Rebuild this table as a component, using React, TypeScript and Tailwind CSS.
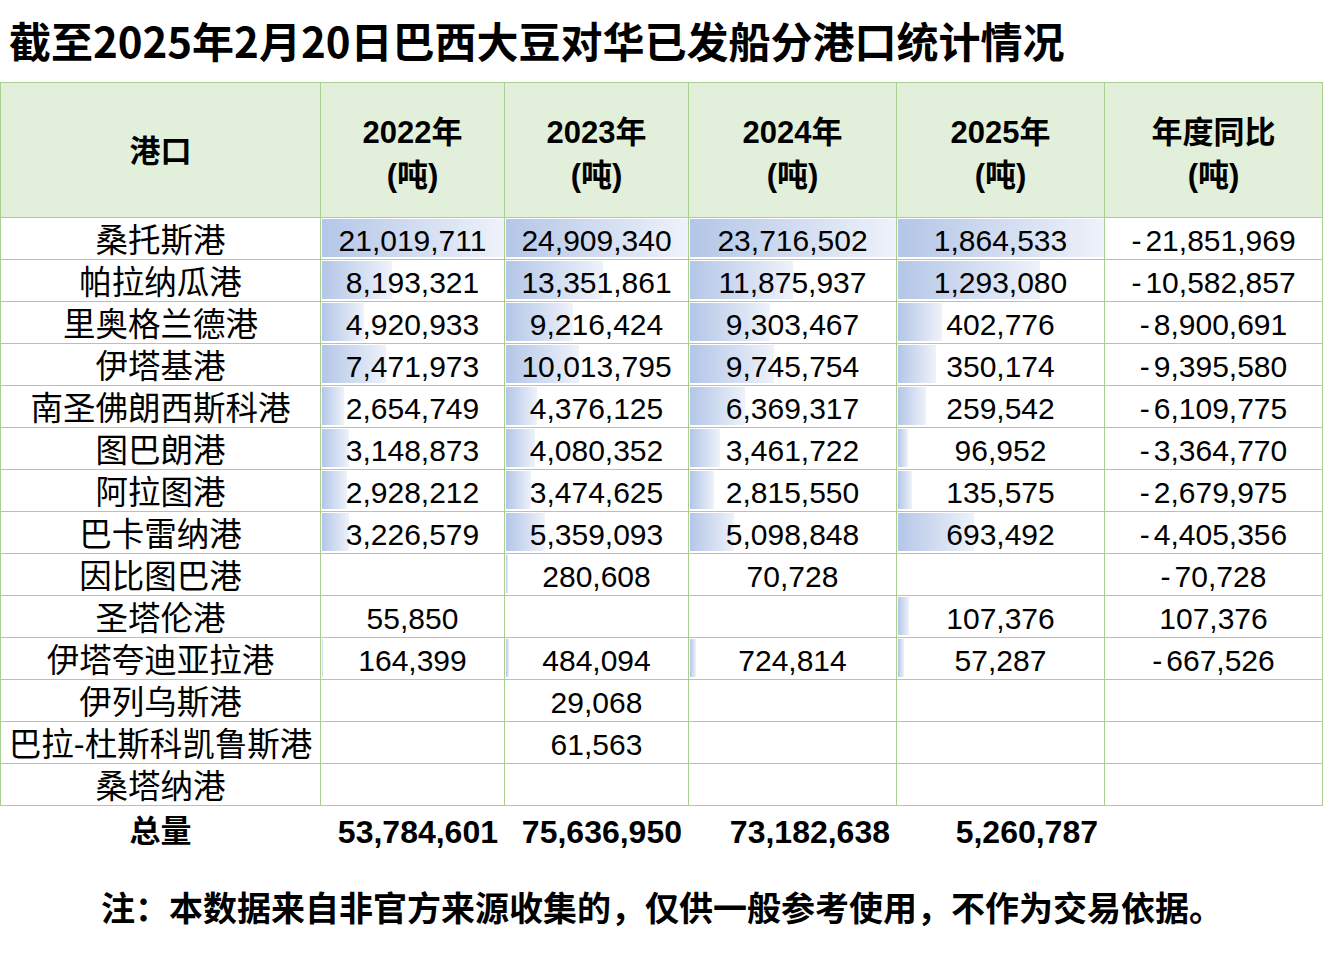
type Row = {
  port: string
  values: (number | null)[]
  yoy: string
}

const rows: Row[] = [
  { port: '桑托斯港', values: [21019711, 24909340, 23716502, 1864533], yoy: '-21,851,969' },
  { port: '帕拉纳瓜港', values: [8193321, 13351861, 11875937, 1293080], yoy: '-10,582,857' },
  { port: '里奥格兰德港', values: [4920933, 9216424, 9303467, 402776], yoy: '-8,900,691' },
  { port: '伊塔基港', values: [7471973, 10013795, 9745754, 350174], yoy: '-9,395,580' },
  { port: '南圣佛朗西斯科港', values: [2654749, 4376125, 6369317, 259542], yoy: '-6,109,775' },
  { port: '图巴朗港', values: [3148873, 4080352, 3461722, 96952], yoy: '-3,364,770' },
  { port: '阿拉图港', values: [2928212, 3474625, 2815550, 135575], yoy: '-2,679,975' },
  { port: '巴卡雷纳港', values: [3226579, 5359093, 5098848, 693492], yoy: '-4,405,356' },
  { port: '因比图巴港', values: [null, 280608, 70728, null], yoy: '-70,728' },
  { port: '圣塔伦港', values: [55850, null, null, 107376], yoy: '107,376' },
  { port: '伊塔夸迪亚拉港', values: [164399, 484094, 724814, 57287], yoy: '-667,526' },
  { port: '伊列乌斯港', values: [null, 29068, null, null], yoy: '' },
  { port: '巴拉-杜斯科凯鲁斯港', values: [null, 61563, null, null], yoy: '' },
  { port: '桑塔纳港', values: [null, null, null, null], yoy: '' },
]

const years = ['2022年', '2023年', '2024年', '2025年']
// inner width of each year cell, used to scale the data bars
const barSpace = [182, 182, 206, 206]
const totals = ['53,784,601', '75,636,950', '73,182,638', '5,260,787']

const fmt = (n: number) => n.toLocaleString('en-US')

const max = [0, 1, 2, 3].map((i) => Math.max(...rows.map((r) => r.values[i] ?? 0)))

function ValueCell({ value, col }: { value: number | null; col: number }) {
  const bar = value ? Math.floor((value / max[col]) * barSpace[col]) : 0
  return (
    <div className="relative flex h-[42px] items-center justify-center border-r border-b border-[#a9d08e] pt-[4px]">
      {bar > 0 && (
        <div
          className="absolute top-[1px] bottom-[2px] left-[1px] bg-linear-to-r from-[#b4c6e7] to-[#eef2fa]"
          style={{ width: bar }}
        />
      )}
      <span className="relative">{value ? fmt(value) : ''}</span>
    </div>
  )
}

function Change({ text }: { text: string }) {
  const neg = text.startsWith('-')
  return (
    <div className="flex h-[42px] items-center justify-center border-r border-b border-[#a9d08e] pt-[4px]">
      {neg && <span className="mr-[4px]">-</span>}
      {neg ? text.slice(1) : text}
    </div>
  )
}

export default function App() {
  return (
    <div className="min-h-[966px] w-[1324px] bg-white text-black" style={{ fontFamily: '"Liberation Sans", "Noto Sans CJK SC", sans-serif' }}>
      <div className="flex h-[82px] items-center pl-[9px] pb-[3px]">
        <h1 className="text-[42px] leading-none font-bold" style={{ fontFamily: '"Noto Sans CJK SC", sans-serif' }}>
          截至2025年2月20日巴西大豆对华已发船分港口统计情况
        </h1>
      </div>

      <div className="grid w-[1323px] grid-cols-[320px_184px_184px_208px_208px_218px] border-t border-l border-[#a9d08e] text-[30px]">
        <div className="flex h-[135px] items-center justify-center border-r border-b border-[#a9d08e] bg-[#e2efda] pt-[4px] text-[31px] font-bold">
          港口
        </div>
        {years.map((y) => (
          <div key={y} className="flex h-[135px] flex-col items-center justify-center border-r border-b border-[#a9d08e] bg-[#e2efda] pt-[7px] text-[31px] leading-[43px] font-bold">
            <span>{y}</span>
            <span>(吨)</span>
          </div>
        ))}
        <div className="flex h-[135px] flex-col items-center justify-center border-r border-b border-[#a9d08e] bg-[#e2efda] pt-[7px] text-[31px] leading-[43px] font-bold">
          <span>年度同比</span>
          <span>(吨)</span>
        </div>

        {rows.map((r) => (
          <div key={r.port} className="contents">
            <div className="flex h-[42px] items-center justify-center border-r border-b border-[#a9d08e] pt-[6px] text-[32.5px] whitespace-nowrap">
              {r.port}
            </div>
            {r.values.map((v, i) => (
              <ValueCell key={i} value={v} col={i} />
            ))}
            <Change text={r.yoy} />
          </div>
        ))}
      </div>

      <div className="grid h-[52px] w-[1323px] grid-cols-[321px_184px_184px_208px_208px_218px] items-center text-[32px] font-bold">
        <div className="text-center text-[31px]">总量</div>
        {totals.map((t) => (
          <div key={t} className="pr-[7px] text-right">
            {t}
          </div>
        ))}
        <div />
      </div>

      <p className="mt-[23px] text-center text-[34px] font-bold" style={{ fontFamily: '"Noto Sans CJK SC", sans-serif' }}>
        注：本数据来自非官方来源收集的，仅供一般参考使用，不作为交易依据。
      </p>
    </div>
  )
}
